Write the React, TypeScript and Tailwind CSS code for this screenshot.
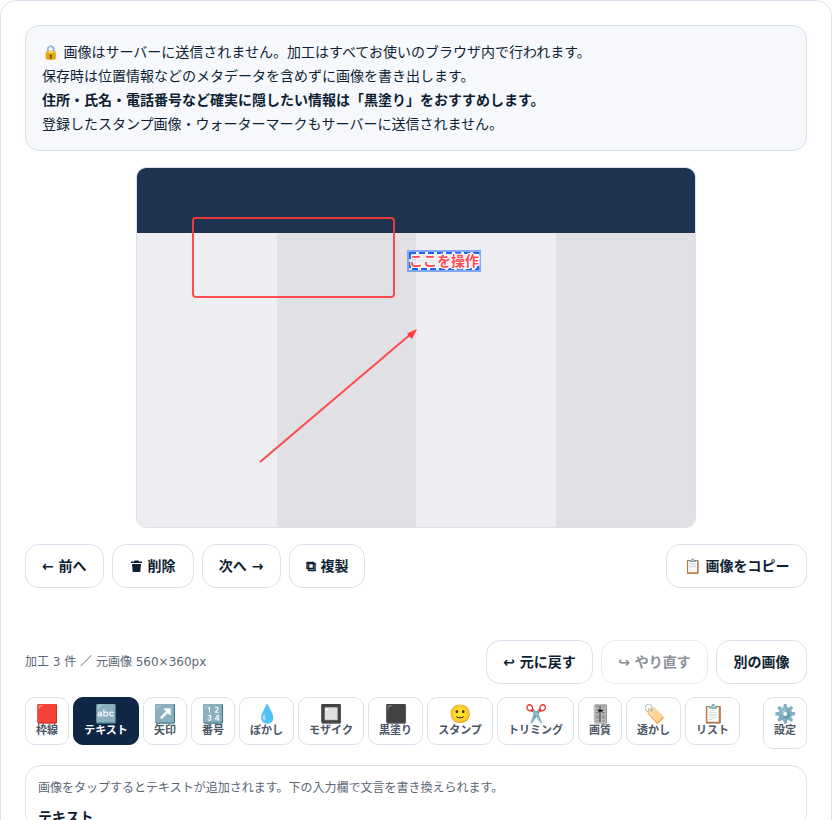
const font = "font-['DejaVu_Sans','Noto_Sans_CJK_JP',sans-serif]";

function Btn({ children, disabled, w }: { children: React.ReactNode; disabled?: boolean; w?: string }) {
  return (
    <button
      className={`h-[44px] px-4 ${w ?? ""} rounded-[14px] border bg-white text-[14px] font-bold whitespace-nowrap ${
        disabled ? "border-[#e6ebf2] text-[#8a8f98]" : "border-[#d9e1ec] text-[#0f1f33]"
      }`}
    >
      {children}
    </button>
  );
}

const tools = [
  { icon: "🟥", label: "枠線", w: "w-[44px]" },
  { icon: "🔤", label: "テキスト", w: "w-[66px]", active: true },
  { icon: "↗️", label: "矢印", w: "w-[44px]" },
  { icon: "🔢", label: "番号", w: "w-[44px]" },
  { icon: "💧", label: "ぼかし", w: "w-[55px]" },
  { icon: "🔲", label: "モザイク", w: "w-[66px]" },
  { icon: "⬛", label: "黒塗り", w: "w-[55px]" },
  { icon: "🙂", label: "スタンプ", w: "w-[66px]" },
  { icon: "✂️", label: "トリミング", w: "w-[77px]" },
  { icon: "🎚️", label: "画質", w: "w-[44px]" },
  { icon: "🏷️", label: "透かし", w: "w-[55px]" },
  { icon: "📋", label: "リスト", w: "w-[55px]" },
];

function Tool({ icon, label, w, active, h }: { icon: string; label: string; w: string; active?: boolean; h?: string }) {
  return (
    <button
      className={`${w} ${h ?? "h-[48px]"} shrink-0 rounded-[10px] border pt-[6px] flex flex-col items-center justify-start text-[11px] font-bold leading-[14px] ${
        active ? "bg-[#0f2744] border-[#0f2744] text-white" : "bg-white border-[#d9e1ec] text-[#4a5565]"
      }`}
    >
      <span className="text-[18px] leading-[20px]">{icon}</span>
      <span>{label}</span>
    </button>
  );
}

export default function App() {
  return (
    <div lang="ja" className={`${font} h-[820px] overflow-hidden bg-white text-[#0f1f33]`}>
      <div className="h-[900px] px-[24px] pt-[24px] rounded-t-[16px] border border-[#d9e1ec]">
        {/* Notice */}
        <div className="h-[126px] rounded-[14px] border border-[#d9e1ec] bg-[#f6f8fc] px-4 pt-[14px] text-[14px] leading-[24px]">
          <p>🔒 画像はサーバーに送信されません。加工はすべてお使いのブラウザ内で行われます。</p>
          <p>保存時は位置情報などのメタデータを含めずに画像を書き出します。</p>
          <p className="font-bold">住所・氏名・電話番号など確実に隠したい情報は「黒塗り」をおすすめします。</p>
          <p>登録したスタンプ画像・ウォーターマークもサーバーに送信されません。</p>
        </div>

        {/* Canvas */}
        <div className="mt-4 flex justify-center">
          <div className="relative w-[560px] h-[361px] rounded-[10px] border border-[#d9e1ec] overflow-hidden flex flex-col">
            <div className="h-[65px] bg-[#1e3350]" />
            <div className="flex-1 grid grid-cols-4">
              <div className="bg-[#eeedf1]" />
              <div className="bg-[#e1e0e4]" />
              <div className="bg-[#eeedf1]" />
              <div className="bg-[#e1e0e4]" />
            </div>
            <div className="absolute left-[55px] top-[49px] w-[203px] h-[81px] rounded-[4px] border-[2px] border-[#ff3b3b]/90" />
            <div className="absolute left-[270px] top-[82px] h-[22px] w-[74px] border-2 border-[#80a6f6] flex items-center justify-center">
              <svg className="absolute inset-0" width="70" height="18" fill="none">
                <rect x="1" y="1" width="68" height="16" stroke="#2563eb" strokeWidth="2" strokeDasharray="6 3" />
              </svg>
              <span className="relative text-[14px] font-bold text-[#ff4d57] whitespace-nowrap leading-[17px] [-webkit-text-stroke:2px_white] [paint-order:stroke_fill]">ここを操作</span>
            </div>
            <svg className="absolute inset-0" width="560" height="361" fill="none">
              <path d="M123 294 L275 165" stroke="#ff3b3b" strokeOpacity="0.9" strokeWidth="2" />
              <path d="M280 161 L270 165.500 L275 171 Z" fill="#ff3b3b" />
            </svg>
          </div>
        </div>

        {/* Actions */}
        <div className="mt-4 flex gap-2 items-center">
          <Btn>← 前へ</Btn>
          <button className="h-[44px] w-[82px] pl-[17px] rounded-[14px] border border-[#d9e1ec] bg-white text-[14px] font-bold whitespace-nowrap text-[#0f1f33] flex items-center">
            <svg className="ml-px mr-[6px]" width="11" height="12" viewBox="0 0 11 12" fill="#0f1f33">
              <path d="M3.500 0.500 H7.500 L8 1.500 H11 V3 H0 V1.500 H3 Z" />
              <path d="M1 4 H10 L9.300 12 H1.700 Z" />
            </svg>
            削除
          </button>
          <Btn w="w-[79px]">次へ →</Btn>
          <Btn>⧉ 複製</Btn>
          <div className="ml-auto">
            <Btn w="w-[141px]">📋 画像をコピー</Btn>
          </div>
        </div>

        {/* Status */}
        <div className="mt-[52px] flex items-center gap-2">
          <span className="text-[12px] text-[#5a6675]">加工 3 件 ／ 元画像 560×360px</span>
          <div className="ml-auto flex gap-2">
            <Btn w="w-[107px]">↩ 元に戻す</Btn>
            <Btn w="w-[107px]" disabled>↪ やり直す</Btn>
            <Btn w="w-[91px]">別の画像</Btn>
          </div>
        </div>

        {/* Toolbar */}
        <div className="mt-[13px] flex items-start gap-[4px]">
          {tools.map((t) => (
            <Tool key={t.label} {...t} />
          ))}
          <div className="ml-auto">
            <Tool icon="⚙️" label="設定" w="w-[44px]" h="h-[52px]" />
          </div>
        </div>

        {/* Panel */}
        <div className="mt-[16px] rounded-[16px] border border-[#d9e1ec] px-3 pt-[13px]">
          <p className="text-[12px] text-[#5a6675]">画像をタップするとテキストが追加されます。下の入力欄で文言を書き換えられます。</p>
          <p className="mt-[10px] text-[14px] font-bold">テキスト</p>
        </div>
      </div>
    </div>
  );
}
